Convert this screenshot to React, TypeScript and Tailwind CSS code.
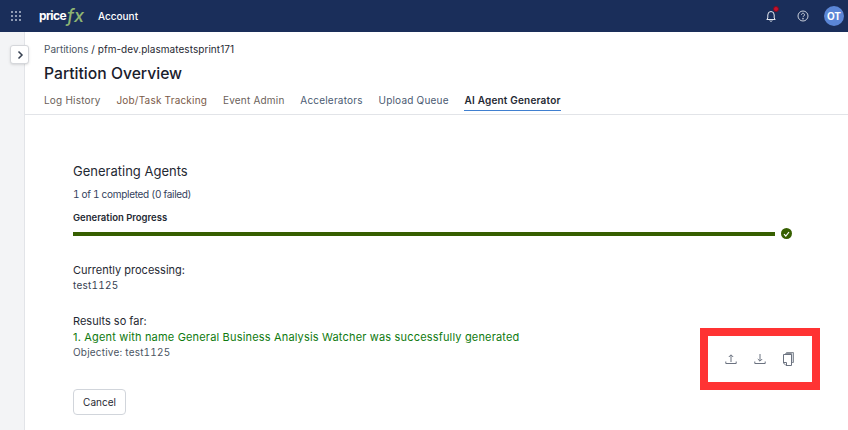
const Grid = () => (
  <svg width="12" height="12" viewBox="0 0 12 12" fill="#8f9bb3">
    {[1, 5, 9].map((y) => [1, 5, 9].map((x) => <rect key={`${x}-${y}`} x={x} y={y} width="2" height="2" />))}
  </svg>
);

export default function App() {
  return (
    <div className="w-[848px] h-[430px] overflow-hidden bg-white flex flex-col font-['Inter',sans-serif] text-[#1f2933]">
      <header className="h-8 shrink-0 bg-[#1a2e5a] flex items-center text-white">
        <div className="ml-[10px] w-3 flex"><Grid /></div>
        <div className="ml-[17px] flex items-center w-[42px]">
          <span className="text-[12px] font-bold tracking-[-0.6px] leading-none">price</span>
          <span className="ml-[1px] text-[18px] italic font-medium leading-none text-[#8fb573]">fx</span>
        </div>
        <span className="ml-[17px] text-[10px] font-medium">Account</span>
        <div className="ml-auto flex items-center">
          <div className="relative mr-[21px]">
            <svg width="10" height="12" viewBox="0 0 10 12" fill="none" stroke="#e5e9f0" strokeWidth="1" className="block">
              <path d="M.8 9.500h8.400L8.200 8V5a3.200 3.500 0 0 0-6.400 0v3L.8 9.500Z" />
              <path d="M3.800 10.500a1.300 1.300 0 0 0 2.400 0" />
            </svg>
            <span className="absolute -top-[4px] -right-[3px] w-[6px] h-[6px] rounded-full bg-[#c8102e] border border-[#7a1020]" />
          </div>
          <svg width="12" height="12" viewBox="0 0 12 12" fill="none" stroke="#c9cfda" strokeWidth="1" className="mr-[15px]">
            <circle cx="6" cy="6" r="5" />
            <path d="M4.500 4.700a1.500 1.500 0 1 1 2.300 1.300c-.5.300-.8.600-.8 1.200" />
            <circle cx="6" cy="8.800" r=".4" fill="#c9cfda" />
          </svg>
          <div className="mr-[4px] w-5 h-5 rounded-full bg-[#5b86d6] flex items-center justify-center text-[10px] font-bold">OT</div>
        </div>
      </header>
      <div className="flex flex-1 min-h-0">
        <aside className="relative w-[25px] shrink-0 bg-[#f3f4f6] border-r border-[#e2e4e8]">
          <button className="absolute left-[10px] top-[13px] w-[19px] h-[19px] bg-white border border-[#d5d7db] rounded-[3px] flex items-center justify-center shadow-sm">
            <svg width="8" height="10" viewBox="0 0 8 10" fill="none" stroke="#374151" strokeWidth="1.500"><path d="M2.500 1.500 6 5 2.500 8.500" /></svg>
          </button>
        </aside>
        <main className="flex-1 min-w-0 flex flex-col">
          <div className="h-[83px] shrink-0 border-b border-[#e2e4e8] pl-[19px] pt-[10px]">
            <div className="text-[10px] leading-[14px] text-[#1f2933]"><span className="text-[#4b5563]">Partitions</span> / <span className="tracking-[0.05px]">pfm-dev.plasmatestsprint171</span></div>
            <h1 className="mt-[7px] text-[15.700px] leading-[22px] font-medium text-[#1a202c]">Partition Overview</h1>
            <nav className="mt-[8px] flex gap-[15.800px] text-[10px] leading-[14px] tracking-[0.2px] text-[#5f6672]">
              <span className="text-[#6b5f5a]">Log History</span>
              <span className="text-[#7a5a48]">Job/Task Tracking</span>
              <span className="text-[#6b5f5a]">Event Admin</span>
              <span className="text-[#4a5a72]">Accelerators</span>
              <span className="text-[#4a5a72]">Upload Queue</span>
              <span className="relative font-semibold text-[#1f2933]">AI Agent Generator
                <span className="absolute left-0 right-0 top-[17px] h-px bg-[#3f7fd0]" />
              </span>
            </nav>
          </div>
          <section className="relative flex-1 pl-[48px] pt-[46px]">
            <h2 className="text-[13px] leading-[20px] text-[#1f2933]">Generating Agents</h2>
            <p className="mt-[6px] text-[10px] leading-[14px] tabular-nums tracking-[-0.3px] text-[#33415c]">1 of 1 completed (0 failed)</p>
            <p className="mt-[11px] text-[9.500px] leading-[12px] font-semibold text-[#1f2933]">Generation Progress</p>
            <div className="mt-[4px] flex items-center w-[720px]">
              <div className="w-[702px] h-1 bg-[#365f00]" />
              <div className="ml-[6px] w-[11px] h-[11px] rounded-full bg-[#365f00] flex items-center justify-center">
                <svg width="7" height="6" viewBox="0 0 7 6" fill="none" stroke="#fff" strokeWidth="1.200"><path d="M1 3.200 2.800 5 6 1" /></svg>
              </div>
            </div>
            <p className="mt-[23px] text-[11px] leading-[16px] text-[#1f2933]">Currently processing:</p>
            <p className="text-[10px] leading-[14px] tabular-nums tracking-[0.25px] text-[#374151]">test1125</p>
            <p className="mt-[21px] text-[11px] leading-[16px] text-[#1f2933]">Results so far:</p>
            <p className="mt-[1px] text-[11px] leading-[14px] tracking-[0.172px] text-[#0f7a0f]">1. Agent with name General Business Analysis Watcher was successfully generated</p>
            <p className="mt-[1px] text-[10px] leading-[14px] tabular-nums tracking-[0.2px] text-[#4b5563]">Objective: test1125</p>
            <button className="mt-[30px] block w-[53px] h-[26px] bg-white border border-[#d1d5db] rounded-[4px] text-[10px] text-[#1f2933]">Cancel</button>
            <div className="absolute left-[675px] top-[213px] w-[120px] h-[62px] border-[8px] border-[#ff3333] bg-white flex items-center">
              <svg width="12" height="12" viewBox="0 0 12 12" fill="none" stroke="#6b7280" strokeWidth="1" className="ml-[17px]">
                <path d="M6 9V2M3.800 4 6 1.800 8.200 4M.8 8.500v2h10.400v-2" />
              </svg>
              <svg width="12" height="12" viewBox="0 0 12 12" fill="none" stroke="#6b7280" strokeWidth="1" className="ml-[17px]">
                <path d="M6 1v7M3.800 6 6 8.200 8.200 6M.8 8.500v2h10.400v-2" />
              </svg>
              <svg width="11" height="14" viewBox="0 0 11 14" fill="none" strokeWidth="1" className="ml-[17px]">
                <path d="M2.500 1.500 3.500.5h7v10H8.500V1.500Z" fill="#d1d5db" stroke="#8a9099" />
                <path d="M.5 2.500h8v11H3L.5 11V2.500Z" fill="#fff" stroke="#6b7280" />
                <path d="M.5 10.500H3.500V13.500" stroke="#6b7280" />
              </svg>
            </div>
          </section>
        </main>
      </div>
    </div>
  );
}
